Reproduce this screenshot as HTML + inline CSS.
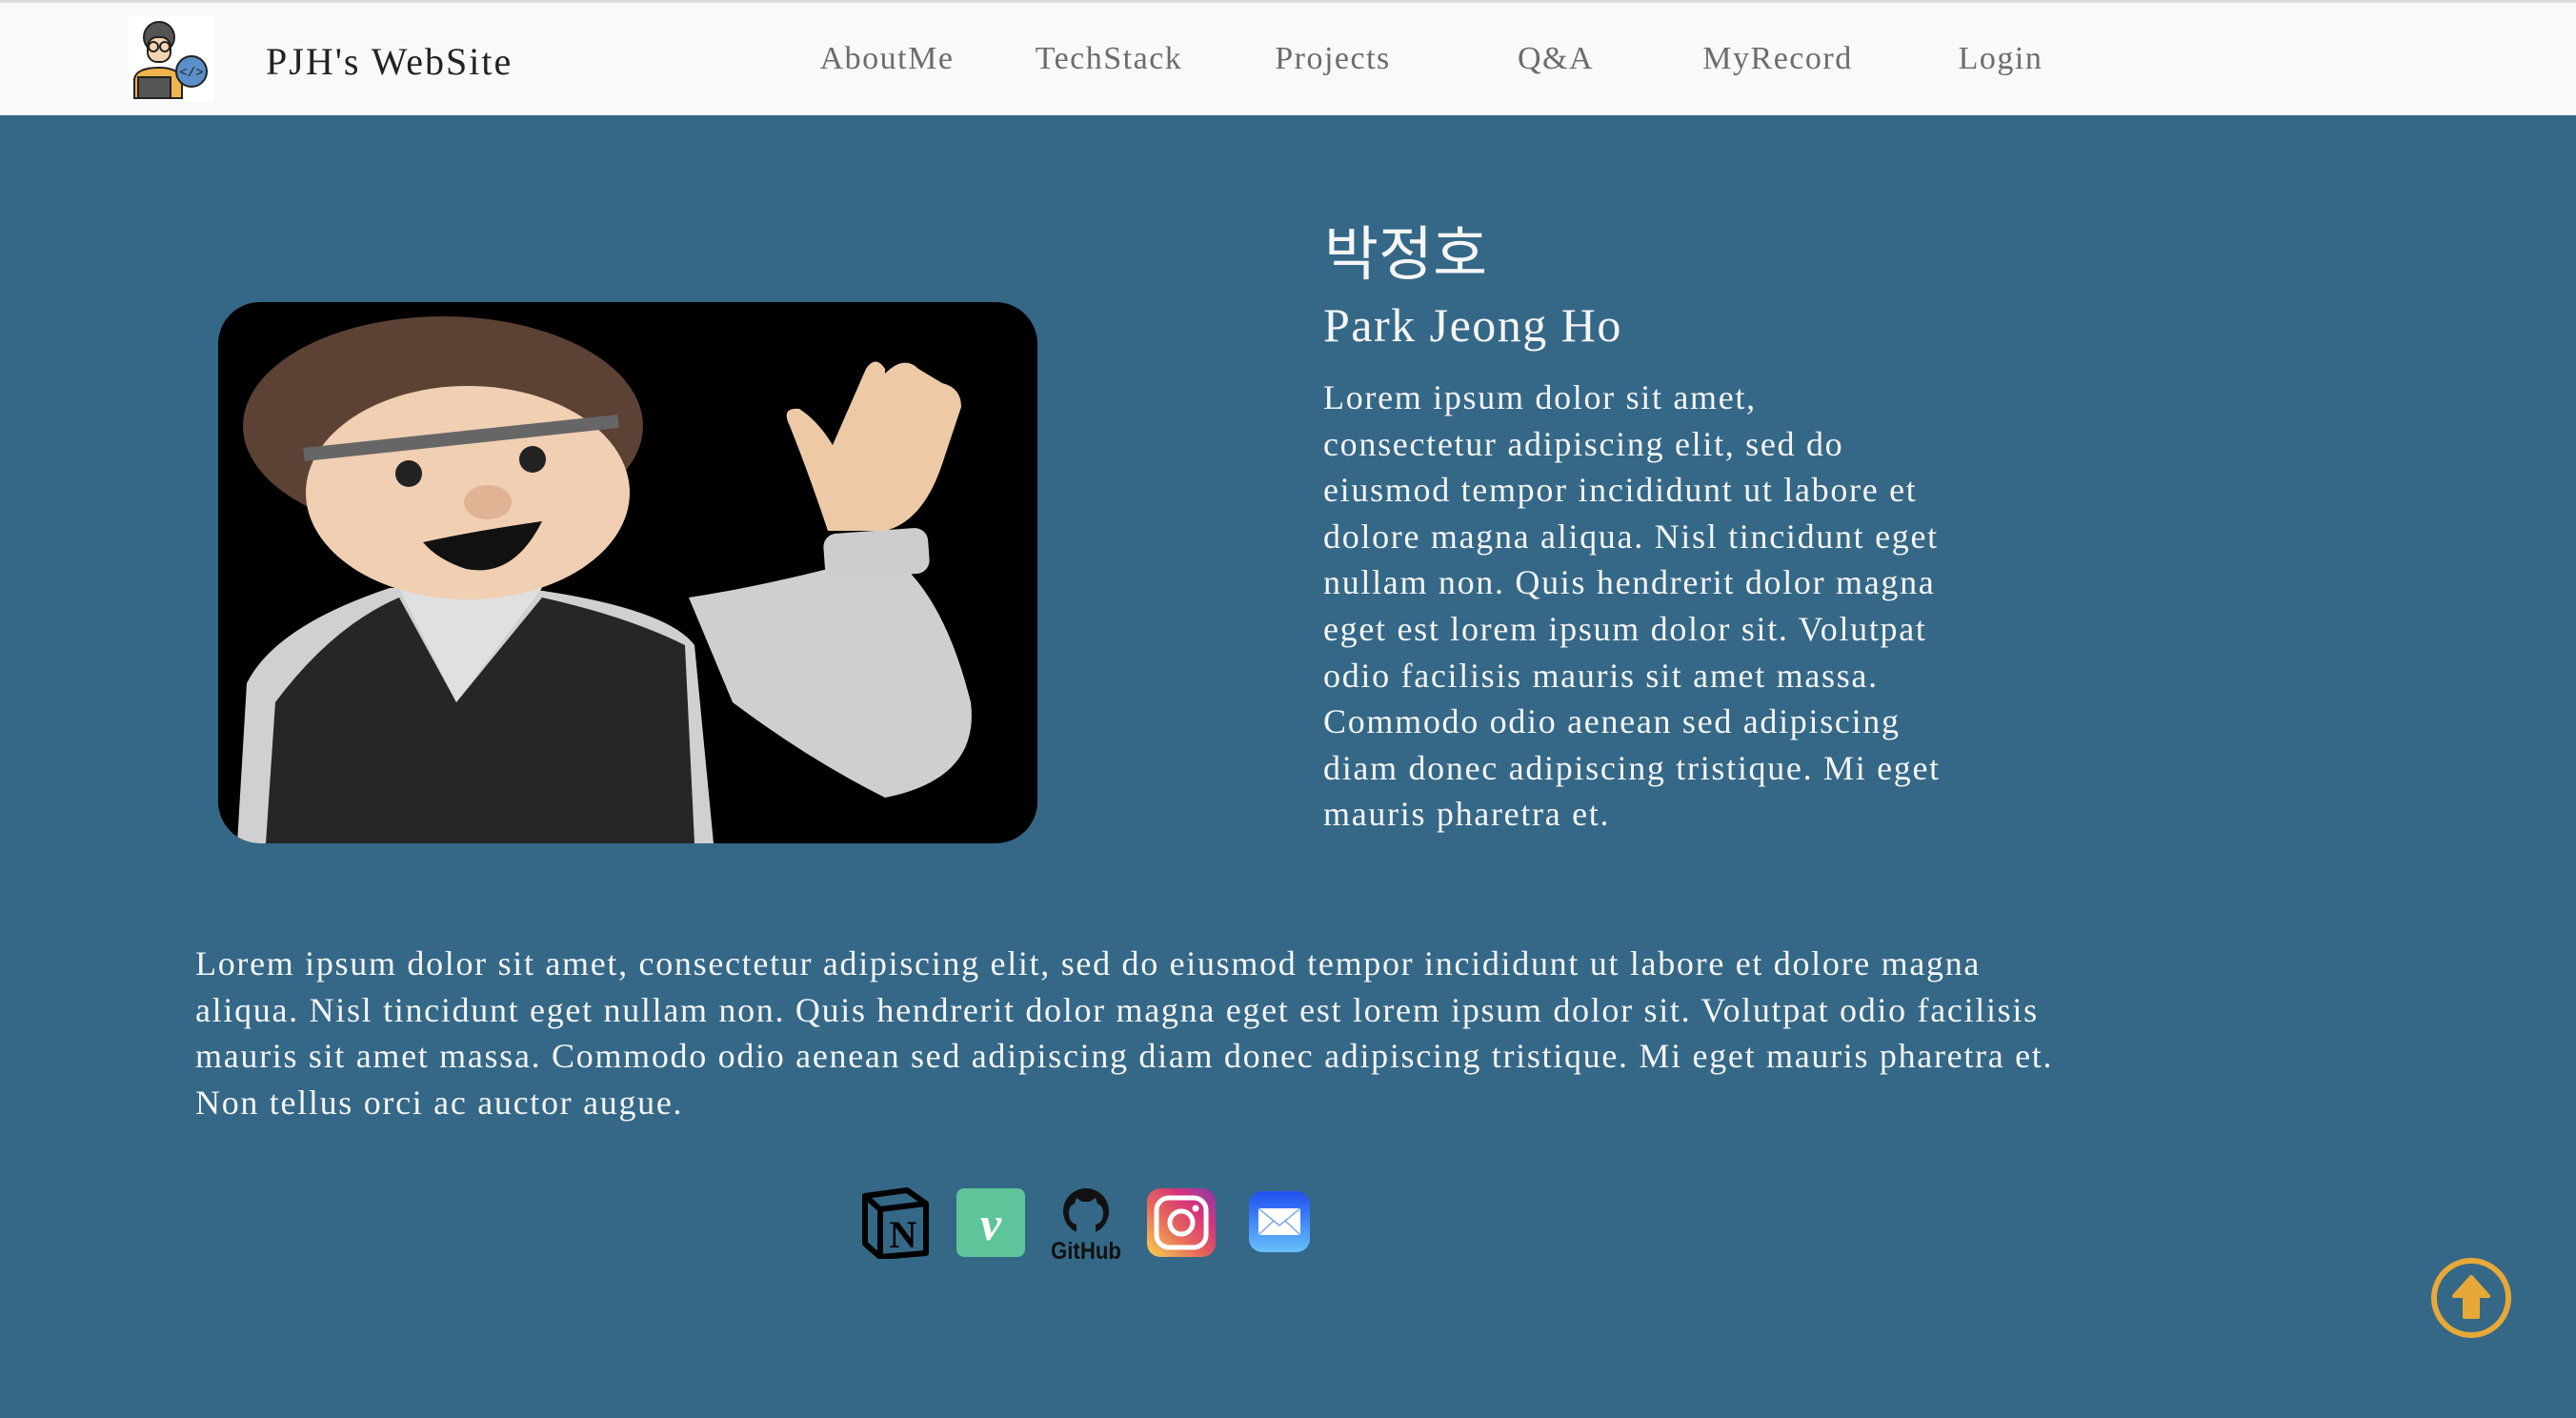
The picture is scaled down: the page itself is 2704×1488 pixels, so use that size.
<!DOCTYPE html>
<html><head><meta charset="utf-8"><style>
*{margin:0;padding:0;box-sizing:border-box}
body{width:2704px;height:1488px;background:#356887;position:relative;overflow:hidden;font-family:"Liberation Serif","Noto Serif CJK SC",serif;color:#f5f5f5}
.hdr{position:absolute;left:0;top:0;width:2704px;height:121px;background:#f8f9fa;border-top:3px solid #dcdcdc}
.brand{position:absolute;left:279px;top:38px;font-size:40px;color:#222;letter-spacing:2px}
.nav{position:absolute;top:40px;font-size:34px;color:#6c6c6c;transform:translateX(-50%);letter-spacing:1.5px}
.p{position:absolute;font-size:36px;line-height:48.6px;letter-spacing:1.7px;white-space:nowrap}
</style></head><body>
<div class="hdr">
<svg style="position:absolute;left:135px;top:14px" width="90" height="90" viewBox="0 0 90 90">
<rect width="90" height="90" fill="#fff"/>
<circle cx="32" cy="22" r="16" fill="#555" stroke="#222" stroke-width="2"/>
<rect x="20" y="22" width="24" height="26" rx="10" fill="#f3d3b0" stroke="#222" stroke-width="2"/>
<circle cx="26" cy="32" r="5" fill="none" stroke="#222" stroke-width="2"/><circle cx="38" cy="32" r="5" fill="none" stroke="#222" stroke-width="2"/>
<path d="M6 86 V66 Q8 54 32 54 Q50 54 56 64 V86Z" fill="#f0b44c" stroke="#222" stroke-width="2"/>
<rect x="10" y="64" width="34" height="22" fill="#555" stroke="#222" stroke-width="2"/>
<circle cx="66" cy="58" r="16" fill="#5a8fc9" stroke="#222" stroke-width="2"/>
<text x="66" y="63" font-size="14" text-anchor="middle" fill="#222" font-family="Liberation Mono">&lt;/&gt;</text>
</svg>
<div class="brand">PJH's WebSite</div>
<div class="nav" style="left:931px">AboutMe</div>
<div class="nav" style="left:1164px">TechStack</div>
<div class="nav" style="left:1399px">Projects</div>
<div class="nav" style="left:1633px">Q&amp;A</div>
<div class="nav" style="left:1866px">MyRecord</div>
<div class="nav" style="left:2100px">Login</div>
</div>

<svg style="position:absolute;left:229px;top:317px" width="860" height="568" viewBox="0 0 860 568">
<defs><clipPath id="c"><rect width="860" height="568" rx="44"/></clipPath></defs>
<g clip-path="url(#c)">
<rect width="860" height="568" fill="#000"/>
<path d="M494 310 Q560 300 640 280 L700 262 Q760 300 790 420 Q800 500 700 520 Q620 480 540 420Z" fill="#cfcfcf"/>
<rect x="636" y="240" width="110" height="48" rx="14" fill="#cdcdcd" transform="rotate(-4 690 264)"/>
<path d="M640 240 Q620 180 600 130 Q590 110 610 112 Q630 125 645 150 L680 70 Q690 55 700 70 L700 75 Q720 55 735 70 L760 85 Q780 90 780 110 Q770 140 760 170 Q740 230 700 240Z" fill="#edc9a6"/>
<path d="M20 568 L30 400 Q60 340 180 300 L320 300 Q470 320 500 360 L520 568Z" fill="#d0d0d0"/>
<path d="M50 568 L60 420 Q120 340 190 310 L250 420 L340 310 Q430 330 490 360 L500 568Z" fill="#262626"/>
<path d="M190 300 L250 420 L340 300 Q300 280 250 285Z" fill="#e0e0e0"/>
<ellipse cx="236" cy="130" rx="210" ry="115" fill="#5b4234"/>
<ellipse cx="262" cy="200" rx="170" ry="112" fill="#f0cfb3"/>
<ellipse cx="262" cy="175" rx="150" ry="60" fill="#f0cfb3"/>
<path d="M90 160 L420 125" stroke="#666" stroke-width="14"/>
<path d="M215 252 Q270 240 340 230 Q310 290 260 280 Q230 270 215 252Z" fill="#111"/>
<circle cx="200" cy="180" r="14" fill="#222"/><circle cx="330" cy="165" r="14" fill="#222"/>
<ellipse cx="283" cy="210" rx="25" ry="18" fill="#e0b394"/>
</g></svg>

<div style="position:absolute;left:1390px;top:216px;font-size:62px;font-family:'Liberation Sans','Noto Sans CJK KR',sans-serif">박정호</div>
<div style="position:absolute;left:1389px;top:312px;font-size:50px;letter-spacing:1.5px">Park Jeong Ho</div>
<div class="p" style="left:1389px;top:393px">Lorem ipsum dolor sit amet,<br>consectetur adipiscing elit, sed do<br>eiusmod tempor incididunt ut labore et<br>dolore magna aliqua. Nisl tincidunt eget<br>nullam non. Quis hendrerit dolor magna<br>eget est lorem ipsum dolor sit. Volutpat<br>odio facilisis mauris sit amet massa.<br>Commodo odio aenean sed adipiscing<br>diam donec adipiscing tristique. Mi eget<br>mauris pharetra et.</div>
<div class="p" style="left:205px;top:987px">Lorem ipsum dolor sit amet, consectetur adipiscing elit, sed do eiusmod tempor incididunt ut labore et dolore magna<br>aliqua. Nisl tincidunt eget nullam non. Quis hendrerit dolor magna eget est lorem ipsum dolor sit. Volutpat odio facilisis<br>mauris sit amet massa. Commodo odio aenean sed adipiscing diam donec adipiscing tristique. Mi eget mauris pharetra et.<br>Non tellus orci ac auctor augue.</div>

<svg style="position:absolute;left:904px;top:1245px" width="72" height="76" viewBox="0 0 72 76">
<path d="M4 10 L48 4 L68 18 L68 70 L20 74 L4 60Z" fill="#356887" stroke="#000" stroke-width="6" stroke-linejoin="round"/>
<path d="M4 10 L20 24 L68 18 M20 24 V74" fill="none" stroke="#000" stroke-width="6"/>
<text x="44" y="64" font-size="40" font-weight="bold" text-anchor="middle" fill="#000" font-family="Liberation Serif">N</text>
</svg>
<svg style="position:absolute;left:1004px;top:1247px" width="72" height="72"><rect width="72" height="72" rx="8" fill="#5ec59b"/><text x="36" y="54" font-size="50" font-style="italic" font-weight="bold" fill="#fff" text-anchor="middle" font-family="Liberation Serif">v</text></svg>
<svg style="position:absolute;left:1100px;top:1247px" width="80" height="76" viewBox="0 0 80 76">
<circle cx="40" cy="24" r="24" fill="#111"/>
<path d="M30 48 V38 Q22 36 22 26 Q22 18 28 16 L30 10 L36 14 H44 L50 10 L52 16 Q58 18 58 26 Q58 36 50 38 V48Z" fill="#356887"/>
<text x="40" y="74" font-size="25" font-weight="bold" fill="#111" text-anchor="middle" font-family="Liberation Sans" textLength="74" lengthAdjust="spacingAndGlyphs">GitHub</text></svg>
<svg style="position:absolute;left:1204px;top:1247px" width="72" height="72"><defs><linearGradient id="ig" x1="0" y1="1" x2="1" y2="0"><stop offset="0" stop-color="#f5d34f"/><stop offset=".4" stop-color="#e66a5a"/><stop offset=".7" stop-color="#d6347a"/><stop offset="1" stop-color="#8b3aad"/></linearGradient></defs><rect width="72" height="72" rx="14" fill="url(#ig)"/><rect x="10" y="10" width="52" height="52" rx="13" fill="none" stroke="#fff" stroke-width="5"/><circle cx="36" cy="36" r="12" fill="none" stroke="#fff" stroke-width="5"/><circle cx="51" cy="21" r="3.5" fill="#fff"/></svg>
<svg style="position:absolute;left:1311px;top:1250px" width="64" height="64"><defs><linearGradient id="ml" x1="0" y1="0" x2="0" y2="1"><stop offset="0" stop-color="#1f4ff0"/><stop offset="1" stop-color="#67c0fb"/></linearGradient></defs><rect width="64" height="64" rx="14" fill="url(#ml)"/><rect x="10" y="18" width="44" height="28" fill="#fff"/><path d="M10 18 L32 36 L54 18 M10 46 L26 31 M54 46 L38 31" fill="none" stroke="#7aa6e8" stroke-width="1.5"/></svg>

<svg style="position:absolute;left:2550px;top:1318px" width="88" height="88" viewBox="0 0 88 88">
<circle cx="44" cy="44" r="39" fill="none" stroke="#e8a838" stroke-width="6"/>
<path d="M44 22 L62 42 H51 V64 H37 V42 H26Z" fill="#e8a838" stroke="#e8a838" stroke-width="4" stroke-linejoin="round"/>
</svg>
</body></html>
